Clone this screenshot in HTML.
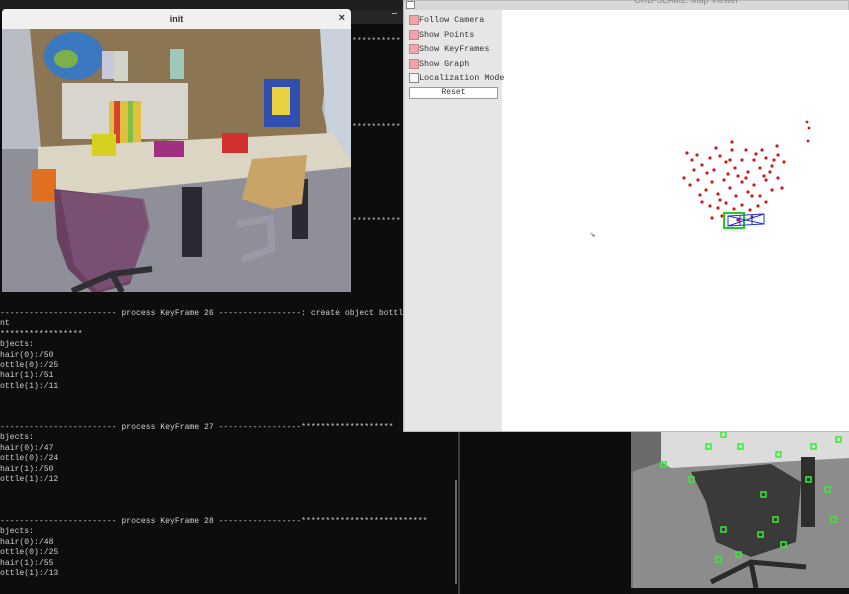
<!DOCTYPE html>
<html><head><meta charset="utf-8"><style>
*{margin:0;padding:0;box-sizing:border-box}
body{width:849px;height:594px;overflow:hidden;background:#0d0d0d;position:relative;font-family:"Liberation Mono",monospace}
.a{position:absolute}
.t{position:absolute;left:0;color:#cfcfcf;font-size:8.1px;line-height:10.4px;white-space:pre;font-family:"Liberation Mono",monospace}
.cb{position:absolute;left:409px;width:10px;height:10px;background:#f3a3ab;border:1px solid #b88}
.lb{position:absolute;left:419px;font-size:8.4px;color:#333;white-space:pre}
</style></head><body>
<div class="a" style="left:0;top:0;width:849px;height:10px;background:#1f1f1f"></div>
<div class="a" style="left:351px;top:10px;width:52px;height:14px;background:#262626"></div>
<div class="a" style="left:392px;top:13px;width:5px;height:1px;background:#aaa"></div>
<div class="t" style="left:352px;top:37px;color:#bbb">**********</div>
<div class="t" style="left:352px;top:123px;color:#bbb">**********</div>
<div class="t" style="left:352px;top:217px;color:#bbb">**********</div>

<div class="t" style="top:309px">------------------------ process KeyFrame 26 -----------------: create object bottl
nt
*****************
bjects:
hair(0):/50
ottle(0):/25
hair(1):/51
ottle(1):/11</div>
<div class="t" style="top:423px">------------------------ process KeyFrame 27 -----------------*******************
bjects:
hair(0):/47
ottle(0):/24
hair(1):/50
ottle(1):/12</div>
<div class="t" style="top:517px">------------------------ process KeyFrame 28 -----------------**************************
bjects:
hair(0):/48
ottle(0):/25
hair(1):/55
ottle(1):/13</div>
<div class="a" style="left:458px;top:432px;width:2px;height:162px;background:#3a3a3a"></div>
<div class="a" style="left:455px;top:480px;width:2px;height:104px;background:#666"></div>

<div class="a" style="left:2px;top:9px;width:349px;height:283px;background:#eee;border-radius:4px 4px 0 0;overflow:hidden">
 <div class="a" style="left:0;top:0;width:349px;height:20px;background:#f0f0f0;text-align:center;font:bold 9px 'Liberation Sans',sans-serif;line-height:20px;color:#333">init</div>
 <div class="a" style="right:6px;top:3px;font:bold 11px 'Liberation Sans',sans-serif;color:#333">×</div>
 <svg class="a" style="left:0;top:20px" width="349" height="263" viewBox="0 0 349 263">
  <rect width="349" height="263" fill="#8e8f98"/>
  <rect width="349" height="120" fill="#b8bcc4"/>
  <polygon points="28,0 330,0 320,80 330,120 40,130" fill="#8b7552"/>
  <polygon points="318,0 349,0 349,130 325,110" fill="#c9d2dc"/>
  <ellipse cx="72" cy="27" rx="30" ry="24" fill="#3a78c0"/>
  <ellipse cx="64" cy="30" rx="12" ry="9" fill="#7bb04a"/>
  <rect x="100" y="22" width="12" height="28" fill="#c8c8d8"/>
  <rect x="112" y="22" width="14" height="30" fill="#d0d4c8"/>
  <rect x="168" y="20" width="14" height="30" fill="#a0c8b8"/>
  <rect x="60" y="54" width="126" height="56" fill="#d8d5cf"/>
  <rect x="107" y="72" width="32" height="44" fill="#e0c040"/>
  <rect x="112" y="72" width="6" height="44" fill="#d84030"/>
  <rect x="126" y="72" width="5" height="44" fill="#80c040"/>
  <rect x="262" y="50" width="36" height="48" fill="#3050b0"/>
  <rect x="270" y="58" width="18" height="28" fill="#e8d040"/>
  <polygon points="36,118 330,104 349,130 349,138 36,170" fill="#dbd5c3"/>
  <rect x="90" y="105" width="24" height="22" fill="#d8d020"/>
  <rect x="152" y="112" width="30" height="16" fill="#a03080"/>
  <rect x="220" y="104" width="26" height="20" fill="#d03030"/>
  <rect x="30" y="140" width="24" height="32" fill="#e07020"/>
  <rect x="180" y="158" width="20" height="70" fill="#2a2a30"/>
  <rect x="290" y="150" width="16" height="60" fill="#2a2a30"/>
  <polygon points="52,160 140,170 146,196 128,255 92,265 66,240 55,210" fill="#6a3f60"/>
  <polygon points="58,162 142,170 148,198 128,252 96,262 72,236" fill="#7e5577" opacity=".8"/>
  <polygon points="250,130 305,126 300,175 270,180 240,170" fill="#c8a468"/>
  <path d="M235 195 L268 190 L270 220 L240 230" stroke="#9a9aa6" stroke-width="7" fill="none"/>
  <path d="M70 262 L110 245 L150 240 M110 245 L120 263" stroke="#303034" stroke-width="6" fill="none"/>
 </svg>
</div>

<div class="a" style="left:403px;top:0;width:446px;height:432px;background:#d8d8d8;border:1px solid #bbb">
 <div class="a" style="left:230px;top:-6px;font:9px 'Liberation Sans',sans-serif;color:#888">ORB-SLAM2: Map Viewer</div>
 <div class="a" style="left:2px;top:0;width:9px;height:8px;background:#fff;border:1px solid #888"></div>
 <div class="a" style="left:1px;top:9px;width:97px;height:421px;background:#e6e6e6"></div>
 <div class="a" style="left:98px;top:9px;width:347px;height:421px;background:#fff"></div>
</div>
<div class="cb" style="top:15px"></div><div class="lb" style="top:15px">Follow Camera</div>
<div class="cb" style="top:30px"></div><div class="lb" style="top:30px">Show Points</div>
<div class="cb" style="top:44px"></div><div class="lb" style="top:44px">Show KeyFrames</div>
<div class="cb" style="top:59px"></div><div class="lb" style="top:59px">Show Graph</div>
<div class="cb" style="top:73px;background:#f4f4f4;border-color:#888"></div><div class="lb" style="top:73px">Localization Mode</div>
<div class="a" style="left:409px;top:87px;width:89px;height:12px;background:#fff;border:1px solid #999;font-size:8px;text-align:center;line-height:10px;color:#333">Reset</div>
<svg class="a" style="left:502px;top:10px" width="347" height="420">
 <g fill="#d01818">
  <circle cx="305" cy="112" r="1.4"/><circle cx="307" cy="118" r="1.4"/><circle cx="306" cy="131" r="1.4"/>
  <circle cx="185" cy="143" r="1.6"/><circle cx="190" cy="150" r="1.6"/><circle cx="195" cy="145" r="1.6"/><circle cx="200" cy="155" r="1.6"/><circle cx="208" cy="148" r="1.6"/><circle cx="212" cy="160" r="1.6"/><circle cx="218" cy="146" r="1.6"/><circle cx="224" cy="152" r="1.6"/><circle cx="230" cy="140" r="1.6"/><circle cx="233" cy="158" r="1.6"/><circle cx="240" cy="150" r="1.6"/><circle cx="246" cy="162" r="1.6"/><circle cx="252" cy="150" r="1.6"/><circle cx="258" cy="158" r="1.6"/><circle cx="264" cy="148" r="1.6"/><circle cx="270" cy="156" r="1.6"/><circle cx="276" cy="145" r="1.6"/><circle cx="282" cy="152" r="1.6"/>
  <circle cx="182" cy="168" r="1.6"/><circle cx="188" cy="175" r="1.6"/><circle cx="196" cy="170" r="1.6"/><circle cx="204" cy="180" r="1.6"/><circle cx="210" cy="172" r="1.6"/><circle cx="216" cy="184" r="1.6"/><circle cx="222" cy="170" r="1.6"/><circle cx="228" cy="178" r="1.6"/><circle cx="234" cy="186" r="1.6"/><circle cx="240" cy="172" r="1.6"/><circle cx="246" cy="182" r="1.6"/><circle cx="252" cy="175" r="1.6"/><circle cx="258" cy="186" r="1.6"/><circle cx="264" cy="170" r="1.6"/><circle cx="270" cy="180" r="1.6"/><circle cx="276" cy="168" r="1.6"/><circle cx="280" cy="178" r="1.6"/>
  <circle cx="200" cy="192" r="1.6"/><circle cx="208" cy="196" r="1.6"/><circle cx="216" cy="198" r="1.6"/><circle cx="224" cy="193" r="1.6"/><circle cx="232" cy="199" r="1.6"/><circle cx="240" cy="195" r="1.6"/><circle cx="248" cy="200" r="1.6"/><circle cx="256" cy="196" r="1.6"/><circle cx="264" cy="192" r="1.6"/><circle cx="210" cy="208" r="1.6"/><circle cx="220" cy="206" r="1.6"/><circle cx="236" cy="210" r="1.6"/><circle cx="250" cy="207" r="1.6"/>
  <circle cx="214" cy="138" r="1.6"/><circle cx="230" cy="132" r="1.6"/><circle cx="260" cy="140" r="1.6"/><circle cx="275" cy="136" r="1.6"/><circle cx="226" cy="164" r="1.6"/><circle cx="244" cy="140" r="1.6"/><circle cx="262" cy="166" r="1.6"/><circle cx="192" cy="160" r="1.6"/><circle cx="236" cy="166" r="1.6"/><circle cx="250" cy="186" r="1.6"/>
  <circle cx="205" cy="163" r="1.6"/><circle cx="218" cy="190" r="1.6"/><circle cx="244" cy="168" r="1.6"/><circle cx="268" cy="162" r="1.6"/><circle cx="254" cy="144" r="1.6"/><circle cx="198" cy="185" r="1.6"/><circle cx="228" cy="150" r="1.6"/><circle cx="272" cy="150" r="1.6"/>
 </g>
 <rect x="222" y="203" width="20" height="15" fill="none" stroke="#20d020" stroke-width="2"/>
 <path d="M226 206 L262 204 L262 214 L226 216 Z M226 206 L262 214 M226 216 L262 204 M238 205 V215 M250 205 V215" stroke="#2030d0" fill="none" stroke-width="1"/>
 <path d="M88 222 l6 4 l-3 1 z" fill="#999"/>
</svg>

<svg class="a" style="left:631px;top:432px" width="218" height="156">
 <rect width="218" height="156" fill="#8c8c8c"/>
 <rect x="0" width="2" height="156" fill="#777"/>
 <polygon points="0,0 218,0 218,26 40,36 30,30" fill="#dcdcdc"/>
 <polygon points="0,0 30,0 30,30 0,40" fill="#6a6a6a"/>
 <polygon points="60,40 140,32 170,50 165,110 120,125 85,110 75,70" fill="#3a3a3a"/>
 <rect x="170" y="25" width="14" height="70" fill="#2e2e2e"/>
 <path d="M80 150 L120 130 L175 135 M120 130 L125 156" stroke="#2a2a2a" stroke-width="5" fill="none"/>
 <g fill="none" stroke="#30f030" stroke-width="1.5">
  <rect x="30" y="30" width="5" height="5"/><rect x="58" y="45" width="5" height="5"/><rect x="90" y="95" width="5" height="5"/><rect x="105" y="120" width="5" height="5"/><rect x="130" y="60" width="5" height="5"/><rect x="142" y="85" width="5" height="5"/><rect x="175" y="45" width="5" height="5"/><rect x="194" y="55" width="5" height="5"/><rect x="150" y="110" width="5" height="5"/><rect x="127" y="100" width="5" height="5"/><rect x="90" y="0" width="5" height="5"/><rect x="107" y="12" width="5" height="5"/><rect x="145" y="20" width="5" height="5"/><rect x="180" y="12" width="5" height="5"/><rect x="205" y="5" width="5" height="5"/><rect x="200" y="85" width="5" height="5"/><rect x="85" y="125" width="5" height="5"/><rect x="75" y="12" width="5" height="5"/>
 </g>
</svg>
<div class="a" style="left:631px;top:588px;width:218px;height:6px;background:#111"></div>
</body></html>
